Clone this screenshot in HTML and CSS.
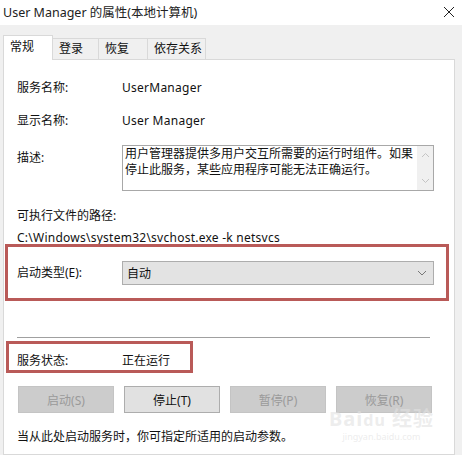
FILE: index.html
```html
<!DOCTYPE html>
<html lang="zh-CN">
<head>
<meta charset="utf-8">
<title>User Manager 的属性(本地计算机)</title>
<link rel="stylesheet" href="styles.css">
</head>
<body>
<div class="window">
  <div class="titlebar">
    <span class="title">User Manager 的属性(本地计算机)</span>
    <svg class="close" width="12" height="12" viewBox="0 0 12 12"><path d="M1 1L11 11M11 1L1 11" stroke="#222" stroke-width="1" fill="none"/></svg>
  </div>
  <div class="tabs">
    <div class="tab active">常规</div>
    <div class="tab t2">登录</div>
    <div class="tab t3">恢复</div>
    <div class="tab t4">依存关系</div>
  </div>
  <div class="panel">
    <div class="row r1"><span class="label">服务名称:</span><span class="value latin">UserManager</span></div>
    <div class="row r2"><span class="label">显示名称:</span><span class="value latin">User Manager</span></div>
    <div class="row desc">
      <span class="label desc-label">描述:</span>
      <div class="textarea">
        <div class="ta-text">用户管理器提供多用户交互所需要的运行时组件。如果停止此服务，某些应用程序可能无法正确运行。</div>
        <div class="scroll">
          <svg width="9" height="6" viewBox="0 0 9 6"><path d="M1 5L4.5 1.5L8 5" stroke="#c4c4c4" fill="none"/></svg>
          <svg width="9" height="6" viewBox="0 0 9 6"><path d="M1 1L4.5 4.5L8 1" stroke="#c4c4c4" fill="none"/></svg>
        </div>
      </div>
    </div>
    <div class="line path-label">可执行文件的路径:</div>
    <div class="line path latin">C:\Windows\system32\svchost.exe -k netsvcs</div>
    <div class="redbox box1">
      <span class="label">启动类型(E):</span>
      <div class="combo">
        <span>自动</span>
        <svg width="10" height="6" viewBox="0 0 10 6"><path d="M1 1L5 5L9 1" stroke="#777" fill="none"/></svg>
      </div>
    </div>
    <div class="sep"></div>
    <div class="redbox box2">
      <span class="label">服务状态:</span>
      <span class="value">正在运行</span>
    </div>
    <div class="buttons">
      <div class="btn disabled">启动(S)</div>
      <div class="btn">停止(T)</div>
      <div class="btn disabled">暂停(P)</div>
      <div class="btn disabled">恢复(R)</div>
    </div>
    <div class="line hint">当从此处启动服务时，你可指定所适用的启动参数。</div>
    <div class="watermark"><span class="wm-big">Bai<span class="wm-du">du</span> 经验</span><span class="wm-small">jingyan.baidu.com</span></div>
  </div>
</div>
</body>
</html>
```
FILE: styles.css
```css
* { box-sizing: border-box; }
html, body { margin: 0; padding: 0; }
body {
  width: 462px;
  height: 455px;
  overflow: hidden;
  background: #f0f0f0;
  font-family: "Noto Sans", "Noto Sans CJK SC", sans-serif;
  font-size: 12px;
  color: #111;
}
.window { width: 462px; height: 455px; display: flex; flex-direction: column; }
.titlebar {
  height: 25px;
  background: #fff;
  display: flex;
  align-items: center;
  justify-content: space-between;
  padding: 0 7px 3px 3px;
}
.title { font-size: 12.5px; color: #222; }
.close { display: block; margin-top: 2px; }
.tabs {
  height: 34px;
  display: flex;
  align-items: flex-end;
  padding-left: 3px;
}
.tab {
  height: 21px;
  border: 1px solid #d9d9d9;
  border-bottom: none;
  margin-left: -1px;
  padding-left: 6px;
  line-height: 19px;
  background: #f0f0f0;
}
.tab.active {
  height: 25px;
  margin-left: 0;
  margin-bottom: -1px;
  background: #fff;
  width: 50px;
  position: relative;
  z-index: 1;
  line-height: 21px;
}
.t2 { width: 47px; }
.t3 { width: 50px; }
.t4 { width: 59px; }
.panel {
  margin-left: 3px;
  width: 452px;
  flex: 1;
  background: #fff;
  border: 1px solid #d9d9d9;
  display: flex;
  flex-direction: column;
  position: relative;
}
.row { display: flex; padding-left: 13px; }
.label { width: 105px; flex: none; line-height: 16px; }
.value { line-height: 16px; }
.latin { letter-spacing: 0.25px; }
.r1 { margin-top: 18px; height: 20px; align-items: center; }
.r2 { margin-top: 13px; height: 20px; align-items: center; }
.desc { margin-top: 14px; }
.desc-label { margin-top: 5px; }
.textarea {
  width: 312px;
  height: 46px;
  border: 1px solid #a8a8a8;
  display: flex;
}
.ta-text { flex: 1; padding: 0 4px 0 2px; line-height: 16px; }
.scroll {
  width: 16px;
  background: #f0f0f0;
  display: flex;
  flex-direction: column;
  align-items: center;
  justify-content: space-between;
  padding: 6px 0 6px;
}
.scroll svg { display: block; }
.line { padding-left: 13px; line-height: 16px; height: 16px; }
.path-label { margin-top: 17px; }
.path { margin-top: 6px; }
.redbox {
  border: 3px solid #b95a58;
  display: flex;
  align-items: center;
}
.box1 {
  margin-top: -2px;
  margin-left: 1px;
  width: 444px;
  height: 57px;
  padding: 14px 0 13px 9px;
}
.combo {
  width: 312px;
  height: 24px;
  background: #e3e3e3;
  border: 1px solid #adadad;
  display: flex;
  align-items: center;
  justify-content: space-between;
  padding: 0 6px 0 4px;
}
.combo svg { display: block; }
.sep {
  margin-top: 36px;
  margin-left: 13px;
  width: 413px;
  height: 1px;
  background: #a0a0a0;
}
.box2 {
  margin-top: 3px;
  margin-left: 2px;
  width: 187px;
  height: 32px;
  padding: 7px 0 0 8px;
}
.buttons {
  margin-top: 13px;
  padding-left: 14px;
  display: flex;
  gap: 10px;
}
.btn {
  width: 96px;
  height: 27px;
  border: 1px solid #adadad;
  background: #e1e1e1;
  display: flex;
  align-items: center;
  justify-content: center;
  color: #111;
}
.btn.disabled { background: #cccccc; border-color: #c4c4c4; color: #9a9a9a; }
.hint { margin-top: 16px; }
.watermark {
  position: absolute;
  right: 20px;
  bottom: 12px;
  display: flex;
  flex-direction: column;
  align-items: center;
  color: rgba(225, 225, 225, 0.6);
  pointer-events: none;
}
.wm-big { font-size: 20px; font-weight: bold; line-height: 22px; letter-spacing: 1px; }
.wm-du { font-size: 16px; }
.wm-small { font-size: 9px; line-height: 11px; }
```
